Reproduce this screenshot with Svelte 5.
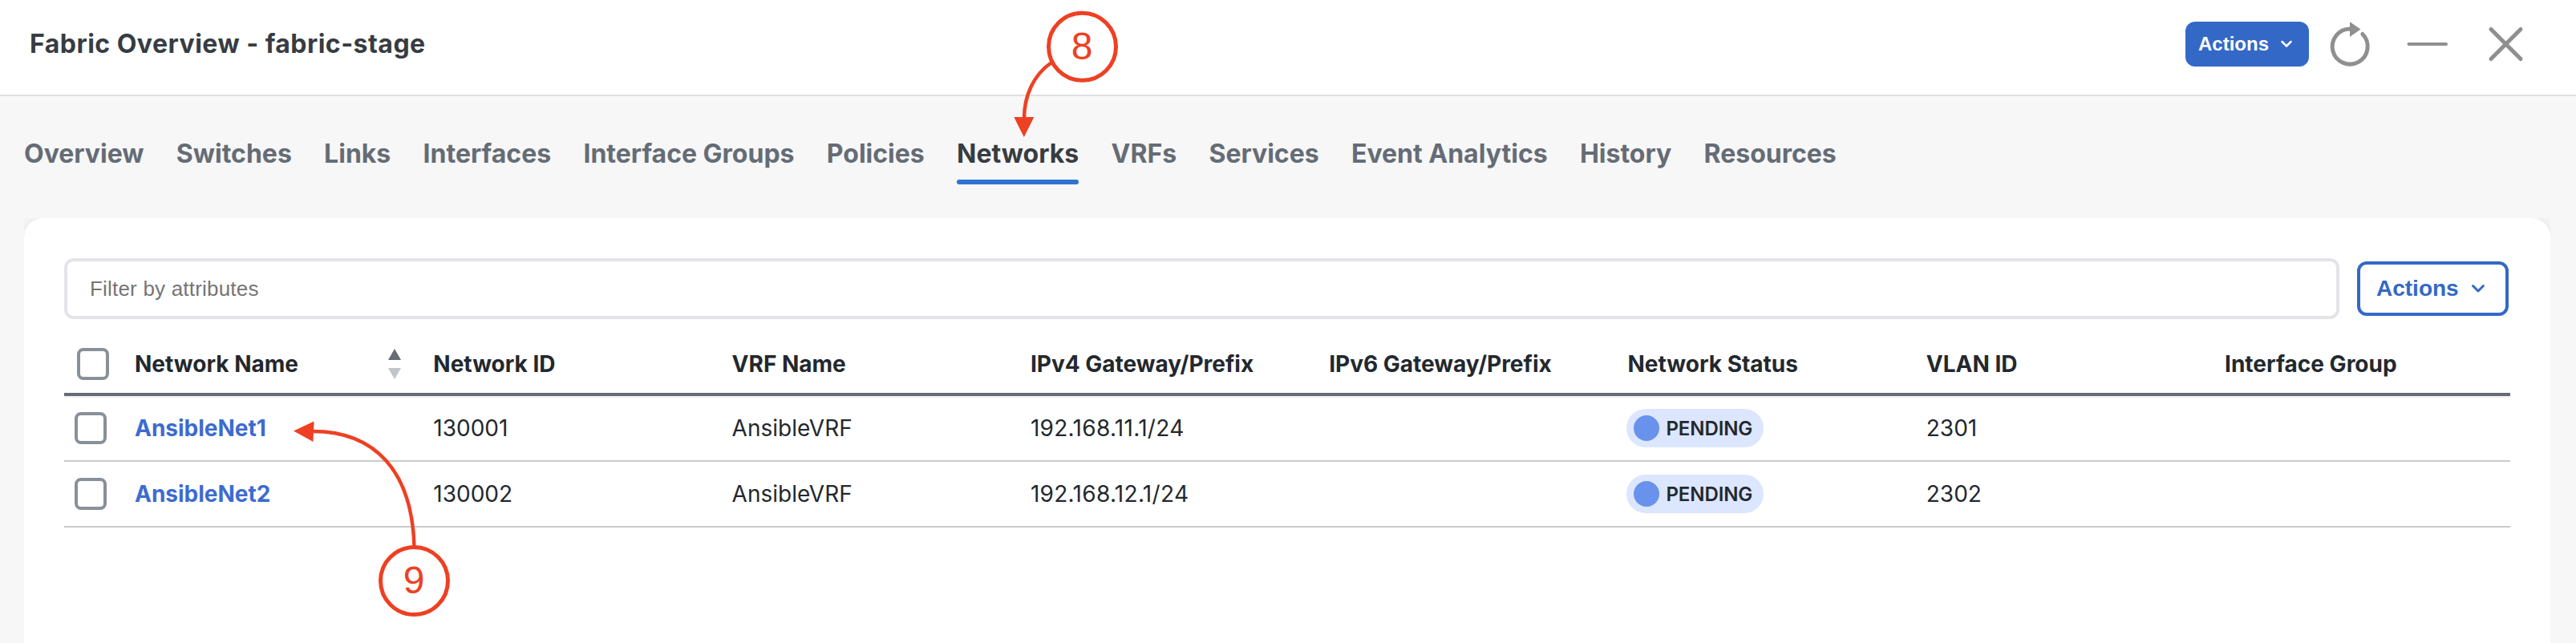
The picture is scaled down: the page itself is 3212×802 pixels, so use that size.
<script>
  const tabs = ['Overview', 'Switches', 'Links', 'Interfaces', 'Interface Groups', 'Policies', 'Networks', 'VRFs', 'Services', 'Event Analytics', 'History', 'Resources'];
  const active = 'Networks';
  const columns = ['Network Name', 'Network ID', 'VRF Name', 'IPv4 Gateway/Prefix', 'IPv6 Gateway/Prefix', 'Network Status', 'VLAN ID', 'Interface Group'];
  const rows = [
    { name: 'AnsibleNet1', id: '130001', vrf: 'AnsibleVRF', v4: '192.168.11.1/24', v6: '', status: 'PENDING', vlan: '2301', group: '' },
    { name: 'AnsibleNet2', id: '130002', vrf: 'AnsibleVRF', v4: '192.168.12.1/24', v6: '', status: 'PENDING', vlan: '2302', group: '' },
  ];
</script>

<div class="page">
  <header>
    <h1>Fabric Overview - fabric-stage</h1>
    <div class="tools">
      <button class="primary">Actions
        <svg width="16" height="10" viewBox="0 0 16 10"><path d="M2.500 2 8 7.500l5.500-5.500" /></svg>
      </button>
      <svg class="refresh" width="56" height="64" viewBox="0 0 56 64">
        <path class="line" d="M28 9A22 22 0 1 0 43.800 15.500" />
        <path class="solid" d="M28 .2 41.500 9.500 28 19z" />
      </svg>
      <svg class="minus" width="56" height="64" viewBox="0 0 56 64"><path class="line min" d="M4.500 30h46.500" /></svg>
      <svg class="close" width="56" height="64" viewBox="0 0 56 64"><path class="line" d="M10 11.500 47 48.500M47 11.500 10 48.500" /></svg>
    </div>
  </header>

  <nav>
    {#each tabs as tab}
      <a class:active={tab === active}>{tab}</a>
    {/each}
  </nav>

  <div class="clip">
    <main>
      <div class="bar">
        <input placeholder="Filter by attributes" />
        <button class="outline">Actions
          <svg width="18" height="12" viewBox="0 0 18 12"><path d="M2.500 2.500 9 9l6.500-6.500" /></svg>
        </button>
      </div>

      <div class="table">
        <div class="tr head">
          <span class="pick"><i class="box"></i></span>
          {#each columns as c, n}
            <span class="cell">{c}
              {#if n === 0}
                <svg class="sort" width="16" height="38" viewBox="0 0 16 38"><path fill="#656c75" d="M8 0l8 14H0z" /><path fill="#c1c5c9" d="M0 24h16L8 38z" /></svg>
              {/if}
            </span>
          {/each}
        </div>
        {#each rows as r}
          <div class="tr row">
            <span class="pick"><i class="box"></i></span>
            <span class="cell link">{r.name}</span>
            <span class="cell">{r.id}</span>
            <span class="cell">{r.vrf}</span>
            <span class="cell address">{r.v4}</span>
            <span class="cell address">{r.v6}</span>
            <span class="cell"><b class="badge"><i></i>{r.status}</b></span>
            <span class="cell">{r.vlan}</span>
            <span class="cell">{r.group}</span>
          </div>
        {/each}
      </div>
    </main>
  </div>

  <svg class="notes" width="3212" height="802" viewBox="0 0 3212 802">
    <circle cx="1349.500" cy="58.300" r="42" />
    <path class="thin" d="M1311 78C1288 94 1277 120 1277 148" />
    <path class="tip" d="M1264.300 146h25l-12.500 25z" />
    <text x="1349" y="74">8</text>
    <circle cx="516.500" cy="724.500" r="42" />
    <path class="thin" d="M516.500 682C514 588 468 538 390 538" />
    <path class="tip" d="M366 537.500 391.500 525.500 390.500 551z" />
    <text x="516" y="740">9</text>
  </svg>
</div>

<style>
  :global(body) { margin: 0; background: #f7f7f7; }
  .page { position: relative; width: 3212px; height: 802px; overflow: hidden; background: #f7f7f7; font-family: Inter, sans-serif; color: #23282e; display: flex; flex-direction: column; }
  header { box-sizing: border-box; height: 120px; flex: none; background: #fff; border-bottom: 2px solid #e0e0e0; display: flex; justify-content: space-between; padding: 0 60px 0 37px; }
  h1 { margin: 0; font-size: 32px; line-height: 109px; font-weight: 700; letter-spacing: .48px; color: #373c42; white-space: nowrap; }
  .tools { display: flex; align-items: flex-start; padding-top: 27px; }
  button { box-sizing: border-box; font-family: "Liberation Sans", sans-serif; font-weight: 700; display: flex; align-items: center; white-space: nowrap; padding: 0; border-radius: 12px; }
  button svg { fill: none; stroke: currentColor; stroke-width: 3; stroke-linecap: round; stroke-linejoin: round; }
  .primary { width: 154px; height: 56px; border: 0; background: #3468c6; color: #fff; font-size: 24px; padding: 0 20px 0 16px; justify-content: space-between; }
  .primary svg { stroke-width: 2.5; }
  .outline { width: 189px; height: 68px; border: 4px solid #3468c6; background: #fff; color: #3468c6; font-size: 28px; padding: 0 25px 0 20px; justify-content: space-between; }
  .refresh { margin-left: 23px; overflow: visible; }
  .minus, .close { margin: -2px 0 0 41px; }
  .line { fill: none; stroke: #8f8f8f; stroke-width: 5; stroke-linecap: round; }
  .min { stroke-width: 4; }
  .solid { fill: #8f8f8f; }
  nav { box-sizing: border-box; height: 152px; flex: none; display: flex; gap: 40.3px; padding: 47px 30px 0; }
  nav a { height: 63px; box-sizing: border-box; font-size: 32px; line-height: 49px; font-weight: 700; color: #656c75; white-space: nowrap; display: flex; flex-direction: column; justify-content: space-between; }
  nav a.active { color: #373c42; }
  nav a.active::after { content: ''; height: 6px; border-radius: 3px; background: #3074d1; }
  .clip { margin: 0 32px 0 30px; flex: 1; overflow: hidden; }
  main { box-sizing: border-box; height: 600px; background: #fff; border-radius: 24px; padding: 50px; box-shadow: 0 0 16px rgba(0, 0, 0, .09); }
  .bar { display: flex; gap: 22px; align-items: center; margin-right: 2px; }
  input { box-sizing: border-box; flex: 1; height: 76px; border: 4px solid #e2e4e8; border-radius: 12px; padding: 0 28px; font: 400 26px "Liberation Sans", sans-serif; letter-spacing: .2px; background: #fff; }
  input::placeholder { color: #757575; opacity: 1; }
  .tr { display: grid; grid-template-columns: 72px repeat(8, 372.3px); box-sizing: border-box; width: 3050px; align-items: center; font-size: 28px; }
  .head { height: 96px; padding-top: 20px; border-bottom: 4px solid #656c75; font-weight: 700; box-shadow: 0 2px #f2f2f2; }
  .row { height: 82px; border-bottom: 2px solid #c9cacb; }
  .cell { display: flex; align-items: center; justify-content: space-between; padding: 0 24px 0 16px; white-space: nowrap; }
  .pick { display: flex; padding-left: 13px; }
  .head .pick { padding-left: 16px; }
  .box { box-sizing: border-box; width: 40px; height: 40px; border: 4px solid #889099; border-radius: 8px; }
  .link { color: #3d6bcf; font-weight: 700; }
  .address { letter-spacing: .3px; }
  .badge { box-sizing: border-box; height: 48px; width: 171px; margin-left: -1px; border-radius: 24px; background: #dce6fe; display: flex; align-items: center; gap: 8px; padding-left: 9px; font-size: 24px; font-weight: 600; letter-spacing: -.1px; }
  .badge i { flex: none; width: 32px; height: 32px; border-radius: 50%; background: #6992ec; }
  .notes { position: absolute; left: 0; top: 0; fill: none; stroke: #ee4023; stroke-width: 5; pointer-events: none; }
  .notes .thin { stroke-width: 4.5; }
  .notes .tip { fill: #ee4023; stroke: none; }
  .notes text { fill: #ee4023; stroke: none; font: 48px "Liberation Sans", sans-serif; text-anchor: middle; }
</style>
